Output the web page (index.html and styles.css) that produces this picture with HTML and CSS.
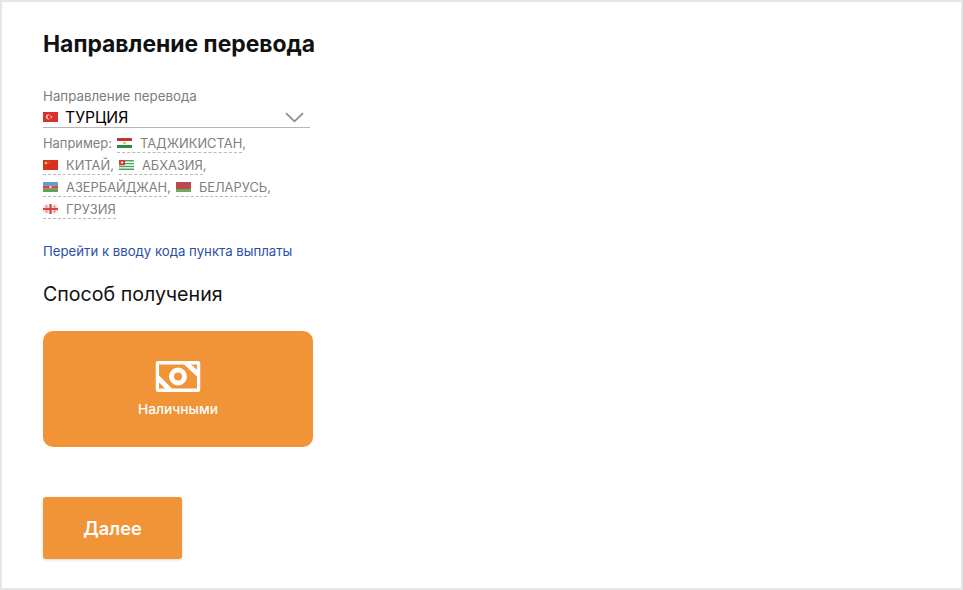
FILE: index.html
```html
<!DOCTYPE html>
<html lang="ru">
<head>
<meta charset="utf-8">
<title>Направление перевода</title>
<link rel="stylesheet" href="styles.css">
</head>
<body>
<main class="panel">
  <h1 class="title">Направление перевода</h1>
  <section class="field">
    <div class="field-label">Направление перевода</div>
    <div class="select">
      <svg class="flag" viewBox="0 0 15 10"><rect width="15" height="10" fill="#d9302c"/><circle cx="5.500" cy="5" r="2.400" fill="#fff"/><circle cx="6.200" cy="5" r="1.900" fill="#d9302c"/><circle cx="8.400" cy="5" r=".8" fill="#fff"/></svg>
      <span class="select-value">ТУРЦИЯ</span>
      <svg class="chevron" viewBox="0 0 20 11"><path d="M1 1l9 8.500L19 1" fill="none" stroke="#8c8c8c" stroke-width="1.800"/></svg>
    </div>
  </section>
  <div class="examples">
    <div class="example-row"><span class="example-lead">Например:</span><a class="example"><svg class="flag" viewBox="0 0 15 10"><rect width="15" height="10" fill="#fff"/><rect width="15" height="3" fill="#c8332e"/><rect y="7" width="15" height="3" fill="#2f8a45"/><rect x="6" y="4.200" width="3" height="1.600" fill="#d9b84a"/></svg><span class="example-name">ТАДЖИКИСТАН</span></a><span class="comma">,</span></div>
    <div class="example-row"><a class="example"><svg class="flag" viewBox="0 0 15 10"><rect width="15" height="10" fill="#d8321f"/><circle cx="3" cy="3" r="1.300" fill="#f4d13a"/><circle cx="5.800" cy="1.600" r=".45" fill="#f4d13a"/><circle cx="6.600" cy="3.200" r=".45" fill="#f4d13a"/></svg><span class="example-name">КИТАЙ</span></a><span class="comma">,</span><a class="example"><svg class="flag" viewBox="0 0 15 10"><rect width="15" height="10" fill="#fff"/><path d="M0 0h15v1.400H0zM0 2.900h15v1.400H0zM0 5.800h15v1.400H0zM0 8.600h15V10H0z" fill="#4da25c"/><rect width="6" height="5.200" fill="#cf3f37"/><circle cx="3" cy="2.500" r="1.100" fill="#fff"/></svg><span class="example-name">АБХАЗИЯ</span></a><span class="comma">,</span></div>
    <div class="example-row"><a class="example"><svg class="flag" viewBox="0 0 15 10"><rect width="15" height="3.400" fill="#4aa6d6"/><rect y="3.400" width="15" height="3.300" fill="#d2484a"/><rect y="6.700" width="15" height="3.300" fill="#5fa35a"/><circle cx="7.500" cy="5" r="1.100" fill="#fff"/></svg><span class="example-name">АЗЕРБАЙДЖАН</span></a><span class="comma">,</span><a class="example"><svg class="flag" viewBox="0 0 15 10"><rect width="15" height="7" fill="#bb4a4d"/><rect y="7" width="15" height="3" fill="#6cab5f"/></svg><span class="example-name">БЕЛАРУСЬ</span></a><span class="comma">,</span></div>
    <div class="example-row"><a class="example"><svg class="flag" viewBox="0 0 15 10"><rect width="15" height="10" fill="#f3f0f0"/><rect x="6.400" width="2.200" height="10" fill="#dc4242"/><rect y="3.900" width="15" height="2.200" fill="#dc4242"/><path d="M2.500 1.500h2v2h-2zM10.500 1.500h2v2h-2zM2.500 6.500h2v2h-2zM10.500 6.500h2v2h-2z" fill="#e77"/></svg><span class="example-name">ГРУЗИЯ</span></a></div>
  </div>
  <a class="code-link">Перейти к вводу кода пункта выплаты</a>
  <h2 class="subtitle">Способ получения</h2>
  <div class="method">
    <svg class="method-icon" viewBox="0 0 45 31">
      <rect x="1.750" y="1.750" width="41.500" height="27.500" rx="1" fill="none" stroke="#fff" stroke-width="3.500"/>
      <path d="M27 2h7l10 9v7zM2 13l16 16h-7l-9-9z" fill="#fff"/>
      <circle cx="22.500" cy="15.500" r="6.500" fill="none" stroke="#fff" stroke-width="5"/>
    </svg>
    <span class="method-label">Наличными</span>
  </div>
  <button class="next" type="button">Далее</button>
</main>
</body>
</html>
```
FILE: styles.css
```css
* { box-sizing: border-box; }
html, body { margin: 0; height: 100%; }
body {
  background: #fff;
  font-family: Inter, "Liberation Sans", sans-serif;
  color: #000;
  overflow: hidden;
}
.panel {
  height: 590px;
  border: 2px solid #e6e6e6;
  padding: 27px 0 0 41px;
}
.title {
  margin: 0;
  font-size: 22.900px;
  line-height: 30px;
  font-weight: 700;
  color: #111;
}
.field { margin-top: 28px; width: 267px; }
.field-label {
  font-size: 13.300px;
  line-height: 18px;
  color: #7d7d7d;
}
.select {
  display: flex;
  align-items: center;
  height: 23px;
  padding-top: 2px;
  border-bottom: 1px solid #b5b5b5;
}
.select-value { margin-left: 7px; font-size: 15.700px; line-height: 19px; }
.chevron { width: 19px; height: 11px; margin-left: auto; margin-right: 6px; }
.flag { width: 15px; height: 10px; flex: none; }
.examples { margin-top: 6px; width: 267px; }
.example-row {
  display: flex;
  align-items: flex-start;
  height: 22px;
  font-size: 12.900px;
  line-height: 20px;
  color: #7f7f7f;
}
.example-lead { margin-right: 5px; }
.example {
  display: flex;
  align-items: flex-start;
  height: 19px;
  border-bottom: 1px dashed #b9b9b9;
}
.example .flag { margin-top: 4px; }
.example-name { margin-left: 8px; }
.comma { margin-right: 5px; }
.code-link {
  display: block;
  margin-top: 20px;
  font-size: 13.200px;
  line-height: 18px;
  color: #2a4fa8;
}
.subtitle {
  margin: 21px 0 0;
  font-size: 19.600px;
  line-height: 26px;
  font-weight: 400;
  color: #111;
}
.method {
  width: 270px;
  height: 116px;
  margin-top: 24px;
  background: #f19337;
  border-radius: 10px;
  display: flex;
  flex-direction: column;
  align-items: center;
  padding-top: 30px;
}
.method-icon { width: 45px; height: 31px; transform: translateX(-.5px); }
.method-label {
  margin-top: 8px;
  font-size: 13.700px;
  line-height: 18px;
  font-weight: 500;
  color: #fff;
}
.next {
  display: block;
  width: 139px;
  height: 62px;
  margin-top: 50px;
  border: 0;
  border-radius: 3px;
  background: #f19337;
  color: #fff;
  font: 600 18.300px/24px Inter, "Liberation Sans", sans-serif;
  box-shadow: 0 1px 3px rgba(0,0,0,.15);
}
```
